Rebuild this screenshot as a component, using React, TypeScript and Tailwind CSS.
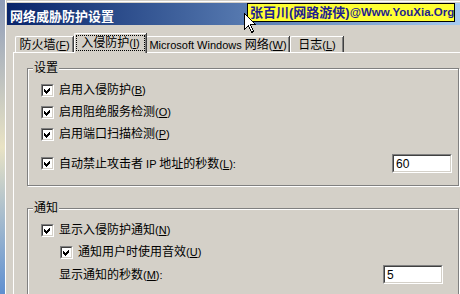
import React from "react";

const FONT = "font-['Liberation_Sans','Noto_Sans_CJK_SC',sans-serif]";

function Acc({ t, k, tail = "" }: { t: React.ReactNode; k: string; tail?: string }) {
  return (
    <span className="whitespace-nowrap">
      {t}
      <span className="text-[11px]">
        (<span className="underline underline-offset-[1px]">{k}</span>){tail}
      </span>
    </span>
  );
}

function Check() {
  return (
    <span className="flex h-[13px] w-[13px] shrink-0 border border-t-[#808080] border-l-[#808080] border-r-white border-b-white">
      <span className="flex flex-1 items-center justify-center border border-t-[#404040] border-l-[#404040] border-r-[#d4d0c8] border-b-[#d4d0c8] bg-white">
        <svg width="9" height="9" viewBox="0 0 9 9" shapeRendering="crispEdges">
          <path d="M1 3h1v1h1v1h1v-1h1v-1h1v-1h1v3h-1v1h-1v1h-1v1h-1v-1h-1v-1h-1z" fill="#000" />
        </svg>
      </span>
    </span>
  );
}

function NumBox({ value }: { value: string }) {
  return (
    <span className="flex h-[19px] w-[60px] shrink-0 border border-t-[#808080] border-l-[#808080] border-r-white border-b-white">
      <span className="flex flex-1 items-center border border-t-[#404040] border-l-[#404040] border-r-[#d4d0c8] border-b-[#d4d0c8] bg-white pl-[2px] text-[12px] leading-none">
        {value}
      </span>
    </span>
  );
}

function Tab({
  label,
  k,
  width,
  active,
}: {
  label: React.ReactNode;
  k: string;
  width: string;
  active?: boolean;
}) {
  if (active) {
    return (
      <div
        className={`relative z-10 -mb-px flex h-[20px] ${width} shrink-0 rounded-tl-[2px] border-l border-t border-white bg-[#d4d0c8] p-[1px] pb-[2px] shadow-[inset_-1px_0_0_#808080,1px_0_0_#404040]`}
      >
        <div className="flex flex-1 items-center justify-center border border-dotted border-black text-[12px] leading-none">
          <Acc t={label} k={k} />
        </div>
      </div>
    );
  }
  return (
    <div
      className={`flex h-[16px] ${width} shrink-0 items-center justify-center rounded-tl-[2px] border-l border-t border-white text-[12px] leading-none shadow-[inset_-1px_0_0_#808080,1px_0_0_#404040]`}
    >
      <Acc t={label} k={k} />
    </div>
  );
}

function Row({ children, className = "" }: { children: React.ReactNode; className?: string }) {
  return <div className={`flex h-[22px] items-center gap-[5px] text-[12px] ${className}`}>{children}</div>;
}

function Group({ title, className = "", children }: { title: string; className?: string; children: React.ReactNode }) {
  return (
    <div
      className={`relative w-[432px] border border-[#808080] pl-[13px] pt-[10px] shadow-[inset_1px_1px_0_#fff,1px_1px_0_#fff] ${className}`}
    >
      <span className="absolute -top-[8px] left-[5px] bg-[#d4d0c8] px-px text-[12px] leading-[14px]">{title}</span>
      {children}
    </div>
  );
}

export default function App() {
  return (
    <div className={`relative flex h-[294px] w-[460px] overflow-hidden bg-[#d4d0c8] text-black ${FONT}`}>
      <div className="w-[5px] shrink-0 bg-gradient-to-b from-[#8f9cb8] via-[#e9e3c4] to-[#5f8fd0]" />
      {/* window: plain block so nothing gets squeezed to 294px */}
      <div className="min-w-0 flex-1 border-l border-white pl-px">
        <div className="h-px bg-[#d4d0c8]" />
        <div className="h-px bg-white" />
        <div className="h-px bg-[#d4d0c8]" />
        <div className="flex h-[22px] items-center bg-gradient-to-r from-[#0a246a] to-[#a6caf0] pl-[3px] pt-[4px] text-[13px] font-bold leading-none text-white">
          网络威胁防护设置
        </div>
        <div className="pl-[6px] pt-[8px]">
          <div className="flex h-[19px] items-end pl-[2px]">
            <Tab label="防火墙" k="F" width="w-[58px]" />
            <div className="w-px" />
            <Tab label="入侵防护" k="I" width="w-[72px]" active />
            <Tab
              label={
                <>
                  <span className="text-[11px]">Microsoft Windows </span>网络
                </>
              }
              k="W"
              width="w-[143px]"
            />
            <div className="w-px" />
            <Tab label="日志" k="L" width="w-[53px]" />
          </div>
          <div className="border-l border-t border-white pl-[13px] pt-[15px]">
            <Group title="设置" className="h-[118px]">
              <Row>
                <Check />
                <Acc t="启用入侵防护" k="B" />
              </Row>
              <Row>
                <Check />
                <Acc t="启用阻绝服务检测" k="O" />
              </Row>
              <Row>
                <Check />
                <Acc t="启用端口扫描检测" k="P" />
              </Row>
              <Row className="mt-[7px] h-[23px] pr-[6px]">
                <Check />
                <Acc
                  t={
                    <>
                      自动禁止攻击者<span className="text-[11px]"> IP </span>地址的秒数
                    </>
                  }
                  k="L"
                  tail=":"
                />
                <span className="ml-auto">
                  <NumBox value="60" />
                </span>
              </Row>
            </Group>
            <Group title="通知" className="mt-[22px] h-[120px]">
              <Row>
                <Check />
                <Acc t="显示入侵防护通知" k="N" />
              </Row>
              <Row className="pl-[19px]">
                <Check />
                <Acc t="通知用户时使用音效" k="U" />
              </Row>
              <Row className="h-[23px] pl-[18px] pr-[15px]">
                <Acc t="显示通知的秒数" k="M" tail=":" />
                <span className="ml-auto">
                  <NumBox value="5" />
                </span>
              </Row>
            </Group>
          </div>
        </div>
      </div>

      <div className="absolute left-[247px] top-[3px] flex h-[19px] w-[208px] items-center whitespace-nowrap border border-black bg-[#ffff33] pl-[2px] text-[13px] font-bold leading-none text-[#1f1f8f]">
        张百川(网路游侠)<span className="text-[11.5px]">@Www.YouXia.Org</span>
      </div>

      <svg className="absolute left-[244px] top-[13px]" width="13" height="22" viewBox="0 0 13 22" shapeRendering="crispEdges">
        <path
          d="M0.5 0.5 L0.5 16.5 L4.5 12.5 L7.5 19.5 L9.5 18.5 L6.5 11.5 L11.5 11.5 Z"
          fill="#fff"
          stroke="#000"
          strokeWidth="1"
        />
      </svg>
    </div>
  );
}
